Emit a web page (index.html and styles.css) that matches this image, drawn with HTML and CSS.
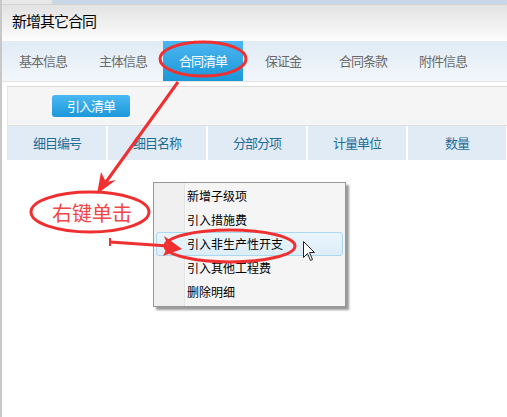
FILE: index.html
```html
<!DOCTYPE html>
<html lang="zh-CN">
<head>
    <meta charset="UTF-8">
    <title>新增其它合同</title>
    <link rel="stylesheet" href="styles.css">
</head>
<body>
    <div class="window">
        <div class="top-strip"></div>
        <div class="title-bar">新增其它合同</div>
        <div class="tabs">
            <div class="tab">基本信息</div>
            <div class="tab">主体信息</div>
            <div class="tab active">合同清单</div>
            <div class="tab">保证金</div>
            <div class="tab">合同条款</div>
            <div class="tab">附件信息</div>
        </div>
        <div class="panel">
            <div class="toolbar">
                <button class="btn">引入清单</button>
            </div>
            <div class="grid-head">
                <div class="col">细目编号</div>
                <div class="col">细目名称</div>
                <div class="col">分部分项</div>
                <div class="col">计量单位</div>
                <div class="col">数量</div>
            </div>
        </div>

        <!-- right-click menu -->
        <div class="context-menu">
            <div class="menu-item">新增子级项</div>
            <div class="menu-item">引入措施费</div>
            <div class="menu-item hover">引入非生产性开支</div>
            <div class="menu-item">引入其他工程费</div>
            <div class="menu-item">删除明细</div>
        </div>

        <!-- red annotations drawn over the screenshot -->
        <svg class="notes" width="507" height="417" viewBox="0 0 507 417">
            <g fill="none" stroke="#f03030" stroke-width="3">
                <ellipse cx="203" cy="59" rx="43" ry="17"/>
                <ellipse cx="90" cy="212" rx="59" ry="20"/>
                <ellipse cx="230" cy="246" rx="65" ry="16"/>
                <line x1="178" y1="82" x2="106" y2="182"/>
                <line x1="110" y1="242" x2="168" y2="246"/>
                <line x1="110" y1="238" x2="110" y2="246" stroke-width="2"/>
            </g>
            <g fill="#f03030">
                <polygon points="97,194 101,172 106,182 116,180"/>
                <polygon points="182,249 163,256 168,246 164,236"/>
            </g>
            <text x="52" y="221" class="note-text">右键单击</text>
            <path class="cursor" d="M303.5 241.5 L303.5 257.5 L307.5 253.5 L310.5 260.5 L312.5 259.5 L309.5 252.5 L314.5 252.5 Z"/>
        </svg>
    </div>
</body>
</html>
```

FILE: styles.css
```css
body {
    margin: 0;
    background: #fff;
    font-family: "Noto Sans CJK SC", "Liberation Sans", sans-serif;
}
.window {
    position: relative;
    width: 507px;
    height: 417px;
    overflow: hidden;
    border-left: 2px solid #c8c8c8;
    box-sizing: border-box;
}
.top-strip {
    height: 4px;
    background: linear-gradient(to right, #e8e8e8 50px, #c9d8e6 50px);
    border-bottom: 1px solid #d4d4d4;
}
.title-bar {
    height: 36px;
    line-height: 32px;
    padding-left: 10px;
    font-size: 15px;
    letter-spacing: -1px;
    color: #000;
    background: linear-gradient(#e2e2e2, #fafafa 90%, #fff);
}
.tabs {
    display: flex;
    height: 40px;
    background: linear-gradient(#e0ebf5, #f2f7fb);
    border-bottom: 1px solid #e2e2e2;
    padding-left: 1px;
}
.tab {
    width: 80px;
    text-align: center;
    line-height: 40px;
    font-size: 13px;
    letter-spacing: -1px;
    color: #6a6a6a;
}
.tab.active {
    color: #fff;
    background: linear-gradient(#4cb6f0, #1b97d9);
}
.panel {
    margin: 4px 0 0 5px;
    border-top: 1px solid #dcdcdc;
    border-left: 1px solid #e6e6e6;
}
.toolbar {
    height: 38px;
    background: #f5f5f5;
    border-bottom: 1px solid #e0e0e0;
    display: flex;
    align-items: center;
    padding-left: 44px;
}
.btn {
    width: 78px;
    height: 22px;
    border: none;
    border-radius: 3px;
    background: linear-gradient(#4ab8f2, #1c98da);
    color: #fff;
    font-family: inherit;
    font-size: 13px;
    letter-spacing: -1px;
    padding: 0;
    line-height: 22px;
}
.grid-head {
    display: grid;
    grid-template-columns: 98px 98px 98px 98px 98px;
    column-gap: 2px;
    background: #fff;
    height: 34px;
}
.col {
    background: #e1ebf5;
    text-align: center;
    line-height: 34px;
    font-size: 13px;
    letter-spacing: -1px;
    color: #1f6b98;
}
.context-menu {
    position: absolute;
    left: 151px;
    top: 182px;
    width: 191px;
    padding: 1px 0 2px 0;
    border: 1px solid #979797;
    background: linear-gradient(to right, #f0f0f0 30px, #e2e3e3 30px, #e2e3e3 31px, #fff 31px, #f5f5f5 32px);
    box-shadow: 3px 3px 2px #9a9a9a;
}
.menu-item {
    height: 22px;
    line-height: 22px;
    padding-left: 30px;
    font-size: 12px;
    color: #000;
    margin: 0 2px;
    border: 1px solid transparent;
    border-radius: 3px;
}
.menu-item.hover {
    background: linear-gradient(#eaf5fc, #dcedf8);
    border-color: #a8d8f2;
}
.notes {
    position: absolute;
    left: -2px;
    top: 0;
    pointer-events: none;
}
.note-text {
    font-size: 20px;
    fill: #f24545;
    font-family: "Noto Sans CJK SC", sans-serif;
}
.cursor {
    fill: #fff;
    stroke: #222;
    stroke-width: 1;
}
```
